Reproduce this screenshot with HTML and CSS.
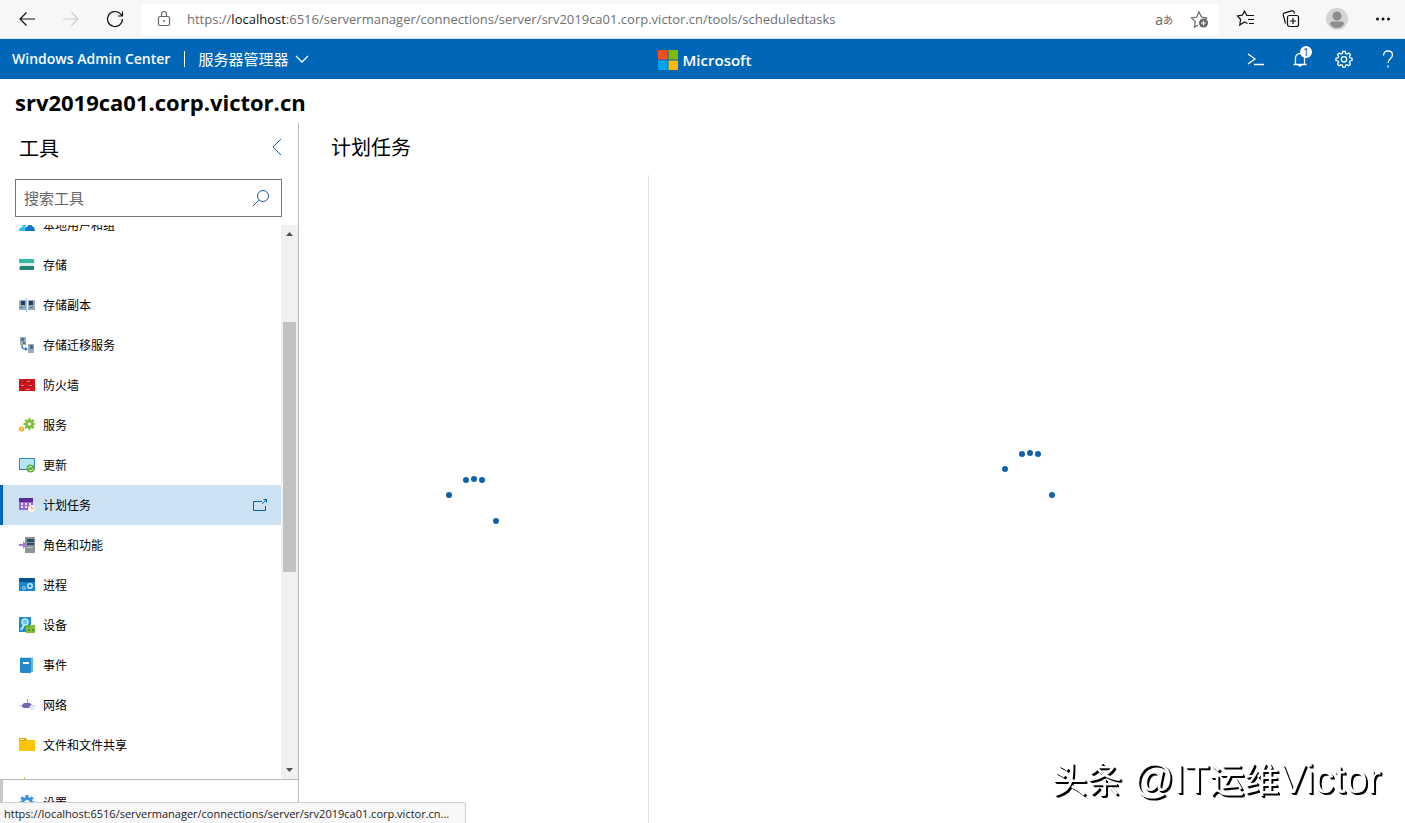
FILE: index.html
```html
<!DOCTYPE html>
<html lang="zh-CN">
<head>
  <meta charset="utf-8">
  <title>Windows Admin Center</title>
  <link rel="stylesheet" href="styles.css">
</head>
<body>
  <div class="browser-bar">
    <button class="nav-btn" title="Back">
      <svg viewBox="0 0 20 20"><path d="M18 10H3M9.500 3.500L3 10l6.500 6.500"/></svg>
    </button>
    <button class="nav-btn disabled" title="Forward" disabled>
      <svg viewBox="0 0 20 20"><path d="M2 10h15M10.500 3.500L17 10l-6.500 6.500"/></svg>
    </button>
    <button class="nav-btn" title="Refresh">
      <svg viewBox="0 0 20 20"><path d="M17.500 10a7.500 7.500 0 1 1-2.300-5.400L17.500 7M17.500 2.500V7H13"/></svg>
    </button>
    <div class="address">
      <svg class="lock" viewBox="0 0 16 18"><rect x="2.500" y="6.500" width="11" height="9" rx="1.500"/><path d="M5.500 6.500V4a2.500 2.500 0 0 1 5 0v2.500"/><circle class="solid" cx="8" cy="11" r="1"/></svg>
      <div class="url" role="textbox" aria-label="Address" contenteditable="true" spellcheck="false">https://<b>localhost</b>:6516/servermanager/connections/server/srv2019ca01.corp.victor.cn/tools/scheduledtasks</div>
      <button class="translate" title="Translate">a<small>あ</small></button>
      <button class="add-favorite" title="Add favorite">
        <svg viewBox="0 0 20 20"><path d="M8 16l-3.500 2 .8-5.300L1.500 8.800l5.200-.8L9 3l2.400 5 5.100.8-2 2"/><circle class="solid" cx="13.500" cy="14" r="4.500"/><path class="plus" d="M13.500 11.500v5M11 14h5"/></svg>
      </button>
    </div>
    <div class="browser-actions">
      <button title="Favorites">
        <svg viewBox="0 0 20 20"><path d="M11.500 14.500L8.500 13l-4.700 3 .8-5.500L1.500 7l4.800-.8L8.500 2l2.300 4.500H18M12 10.500h6M13 14.500h5"/></svg>
      </button>
      <button title="Collections">
        <svg viewBox="0 0 20 20"><path d="M4.500 14.500L2.300 6.200A2 2 0 0 1 3.700 3.800l7-2a2 2 0 0 1 2.500 1.500l.3 1.200"/><rect x="6.500" y="6.500" width="11" height="11" rx="2"/><path d="M12 9v6M9 12h6"/></svg>
      </button>
      <button title="Profile">
        <svg class="avatar" viewBox="0 0 22 22"><circle cx="11" cy="11" r="11" fill="#d4d4d4"/><circle cx="11" cy="8" r="4.500" fill="#8f8c8a"/><path d="M4 16c0-2 1.500-2.500 3-2.500h8c1.500 0 3 .5 3 2.500-1.500 2.800-4 4-7 4s-5.500-1.200-7-4z" fill="#8f8c8a"/></svg>
      </button>
      <button title="More">
        <svg viewBox="0 0 20 20"><circle class="solid" cx="4.500" cy="10" r="1.500"/><circle class="solid" cx="10" cy="10" r="1.500"/><circle class="solid" cx="15.500" cy="10" r="1.500"/></svg>
      </button>
    </div>
  </div>

  <header class="app-bar">
    <div class="app-nav">
      <a class="app-name" href="#">Windows Admin Center</a>
      <button class="solution">服务器管理器
        <svg viewBox="0 0 14 14"><path d="M1 4l6 6 6-6"/></svg>
      </button>
    </div>
    <div class="brand">
      <svg viewBox="0 0 20 20"><path fill="#f25022" d="M0 0h9.500v9.500H0z"/><path fill="#7fba00" d="M10.500 0H20v9.500h-9.500z"/><path fill="#00a4ef" d="M0 10.500h9.500V20H0z"/><path fill="#ffb900" d="M10.500 10.500H20V20h-9.500z"/></svg>
      <span>Microsoft</span>
    </div>
    <div class="app-actions">
      <button title="PowerShell">
        <svg viewBox="0 0 18 18"><path d="M1 4l7 5-7 5M7 14.500h10"/></svg>
      </button>
      <button class="alerts" title="Notifications">
        <svg viewBox="0 0 18 18"><path d="M2.500 14.500h13M4.500 14.500V8a4.500 4.500 0 0 1 9 0v6.500M7.500 15a1.600 1.600 0 0 0 3 0"/></svg>
        <span class="badge">1</span>
      </button>
      <button title="Settings">
        <svg viewBox="0 0 18 18"><path d="M7.700 1.500h2.600l.4 2 1.300.6 1.900-1.100 1.500 1.700-1 1.800.6 1.300 2 .5v2.200l-2 .5-.6 1.300 1 1.800-1.700 1.700-1.700-1.100-1.300.5-.4 2H7.700l-.4-2-1.300-.5-1.800 1.100-1.600-1.700 1-1.800-.6-1.300-2-.5V8.300l2-.5.6-1.300-1-1.800L4.200 3 6 4.100l1.300-.6z"/><circle cx="9" cy="9.300" r="2.700"/></svg>
      </button>
      <button title="Help">
        <svg viewBox="0 0 18 18"><path d="M4.500 5.500c0-3 2-4.500 4.500-4.500s4.500 1.500 4.500 4c0 3.500-4.500 3.500-4.500 8M9 15.500v2"/></svg>
      </button>
    </div>
  </header>

  <h1 class="server-name">srv2019ca01.corp.victor.cn</h1>

  <div class="workspace">
    <aside class="tools">
      <div class="tools-header">
        <h2>工具</h2>
        <button title="Collapse">
          <svg viewBox="0 0 10 18"><path d="M9 1L1 9l8 8"/></svg>
        </button>
      </div>
      <div class="search">
        <input type="text" placeholder="搜索工具" aria-label="搜索工具">
        <svg viewBox="0 0 18 18"><circle cx="11" cy="7" r="5.500"/><path d="M7 11l-6 6"/></svg>
      </div>

      <div class="tool-scroll">
        <ul class="tool-list">
          <li><a href="#">
            <svg viewBox="0 0 16 16"><circle cx="5" cy="7" r="2.500" fill="#32bedd"/><path d="M0 14c0-6 10-6 10 0z" fill="#32bedd"/><circle cx="11" cy="6" r="3" fill="#1466bd"/><path d="M6 14c0-7 10-7 10 0z" fill="#1177c8"/></svg>
            本地用户和组</a></li>
          <li><a href="#">
            <svg viewBox="0 0 16 16"><path fill="#35b8a5" d="M0 2h15v4H0z"/><path fill="#d8f0ed" d="M1 6h14v3H1z"/><path fill="#258277" d="M1 9h14v4H1z"/><path fill="#75cbc1" d="M0 10h1v3H0z"/></svg>
            存储</a></li>
          <li><a href="#">
            <svg viewBox="0 0 16 16"><path fill="#9aaabd" d="M0 3h7v10H0zM9 3h7v10H9z"/><path fill="#253c5c" d="M2 4h4v4H2zM10 4h4v4h-4z"/><path fill="#9dccee" d="M7 1h1v14H7z"/><path fill="#506986" d="M1 10h3v1H1zM11 10h3v1h-3z"/></svg>
            存储副本</a></li>
          <li><a href="#">
            <svg viewBox="0 0 16 16"><path fill="#a0abb3" d="M1 0h6v8H1zM9 7h6v9H9z"/><path fill="#1685c5" d="M2 1h3v3H2z"/><path fill="#47698b" d="M4 5h2v2H4zM11 8h3v4h-3z"/><path d="M3 8c0 4 1 4 5 4" fill="none" stroke="#2779cc" stroke-width="1.500"/><path fill="#2779cc" d="M6 10l3 2-3 2z"/></svg>
            存储迁移服务</a></li>
          <li><a href="#">
            <svg viewBox="0 0 16 16"><path fill="#d6141c" d="M0 2h16v12H0z"/><path fill="none" stroke="#a8161d" d="M0 5.500h16M0 9.500h16M5.500 2v3M10.500 6v3M4.500 10v4M12.500 2v3"/><path stroke="#f58c8c" d="M2 8.500h3M8 4.500h3M7 12.500h4M10 8.500h3"/></svg>
            防火墙</a></li>
          <li><a href="#">
            <svg viewBox="0 0 16 16"><circle cx="10.500" cy="7" r="3" fill="none" stroke="#76bc2d" stroke-width="2.500"/><path stroke="#76bc2d" stroke-width="2" d="M10.500 1v2M10.500 11v2M4.500 7h2M14.500 7h1.500M6.200 2.700l1.500 1.500M13.300 9.800l1.500 1.500M6.200 11.300l1.500-1.500M13.300 4.200l1.500-1.500"/><circle cx="2.500" cy="12" r="1.700" fill="none" stroke="#f2b01c" stroke-width="1.800"/></svg>
            服务</a></li>
          <li><a href="#">
            <svg viewBox="0 0 16 16"><path fill="#b6e4f7" stroke="#3687b8" d="M.5 1.500h15v11H.5z"/><path fill="#3e7aa3" d="M0 12h9v1H0z"/><circle cx="11.500" cy="11.500" r="4" fill="#5fae37"/><path fill="none" stroke="#e4f6d8" d="M9.500 11.500a2 2 0 0 1 3.500-1.500M13.500 11.500a2 2 0 0 1-3.500 1.500"/></svg>
            更新</a></li>
          <li class="active"><a href="#">
            <svg viewBox="0 0 16 16"><path fill="#5b2a9b" d="M0 1h14v4H0z"/><path fill="#9868d5" d="M0 5h14v8H0z"/><path fill="#efe3fc" d="M2 6h2v2H2zM6 6h2v2H6zM10 6h2v2h-2zM2 9h2v2H2zM6 9h2v2H6z"/><circle cx="12.500" cy="11.500" r="3.500" fill="#fff3e0"/><path fill="none" stroke="#df9f61" d="M12.500 9.500v2h2"/></svg>
            计划任务
            <svg class="popout" viewBox="0 0 16 14"><path d="M10 3.500H1.500v9h12V8M10 6l5-5M11.500 1.500h3v3"/></svg></a></li>
          <li><a href="#">
            <svg viewBox="0 0 16 16"><path fill="#8b9299" d="M6 0h10v16H6z"/><path fill="#24506b" d="M8 2h7v3H8zM8 6h7v2H8z"/><path fill="#c0c8cd" d="M8 10h6v1H8z"/><path fill="#a57bd3" d="M0 7h4V4l4 4-4 4V9H0z"/></svg>
            角色和功能</a></li>
          <li><a href="#">
            <svg viewBox="0 0 16 16"><path fill="#1785d0" d="M0 1h16v13H0z"/><path fill="#07558f" d="M0 1h16v4H0z"/><circle cx="11" cy="9" r="2.200" fill="none" stroke="#c9efff" stroke-width="1.500"/><circle cx="5" cy="11" r="1.500" fill="none" stroke="#9bdaf5"/></svg>
            进程</a></li>
          <li><a href="#">
            <svg viewBox="0 0 16 16"><path fill="#2589cd" d="M0 0h12v15H0z"/><circle cx="6" cy="5" r="3" fill="#64c5ef" stroke="#b9edff" stroke-width="1.500"/><path stroke="#b9edff" stroke-width="2" d="M5 8l-3 5"/><path fill="#80be38" d="M7 8h9v8H7z"/><path fill="#4c962d" d="M8 9h3v1H8zM9 12h2v2H9zM13 12h2v2h-2z"/></svg>
            设备</a></li>
          <li><a href="#">
            <svg viewBox="0 0 16 16"><path fill="#65b1e6" d="M2 0h12v15H2z"/><path fill="#2488cf" d="M1 1h11v15H2l-1-1z"/><path fill="#bce4fa" d="M3 0h11v1H3z"/><path fill="#fff" d="M4 5h6v2H4z"/></svg>
            事件</a></li>
          <li><a href="#">
            <svg viewBox="0 0 16 16"><path fill="#d1c3f2" d="M0 8h16v1H0z"/><path fill="#7463b7" d="M3 8l2-2h6l2 2v3H5L3 10z"/><path fill="#a794db" d="M8 2h1v4H8z"/><circle cx="13" cy="10.500" r="2.500" fill="#d6ebfa"/></svg>
            网络</a></li>
          <li><a href="#">
            <svg viewBox="0 0 16 16"><path fill="#e6a500" d="M0 1h7l1 2h8v11H0z"/><path fill="#ffc400" d="M0 4h7l1-1h8v11H0z"/><path fill="#fff0b5" d="M1 2h4v1H1z"/></svg>
            文件和文件共享</a></li>
          <li><a href="#" title="More">
            <svg viewBox="0 0 16 16"><path fill="#e3b866" d="M5 0h1v9H5z"/></svg></a></li>
        </ul>
        <div class="scrollbar" aria-hidden="true">
          <svg viewBox="0 0 17 17"><path d="M5 11l3.500-4 3.500 4z"/></svg>
          <div class="track"><div class="thumb"></div></div>
          <svg viewBox="0 0 17 17"><path d="M5 6l3.500 4L12 6z"/></svg>
        </div>
      </div>

      <a class="tool-settings" href="#">
        <svg viewBox="0 0 16 16"><circle cx="8" cy="8" r="4.500" fill="none" stroke="#3b8fd6" stroke-width="3"/><path stroke="#3b8fd6" stroke-width="3" d="M8 0v3M8 13v3M0 8h3M13 8h3M2.300 2.300l2 2M11.700 11.700l2 2M2.300 13.700l2-2M11.700 4.300l2-2"/></svg>
        设置</a>
    </aside>

    <main class="content">
      <h2>计划任务</h2>
      <div class="panes">
        <section class="pane library">
          <svg class="spinner" viewBox="0 0 60 60"><circle cx="5" cy="20" r="3"/><circle cx="22" cy="5" r="3"/><circle cx="30" cy="4" r="3"/><circle cx="38" cy="5" r="3"/><circle cx="52" cy="46" r="3"/></svg>
        </section>
        <section class="pane details">
          <svg class="spinner" viewBox="0 0 60 60"><circle cx="5" cy="20" r="3"/><circle cx="22" cy="5" r="3"/><circle cx="30" cy="4" r="3"/><circle cx="38" cy="5" r="3"/><circle cx="52" cy="46" r="3"/></svg>
        </section>
      </div>
    </main>
  </div>

  <div class="status">https://localhost:6516/servermanager/connections/server/srv2019ca01.corp.victor.cn...</div>
  <div class="watermark"><span>头条</span> @IT<span>运维</span>Victor</div>
</body>
</html>
```
FILE: styles.css
```css
* {
  box-sizing: border-box;
}

body {
  display: flex;
  flex-direction: column;
  height: 100vh;
  margin: 0;
  overflow: hidden;
  font-family: "Open Sans", "Noto Sans CJK SC", sans-serif;
  font-size: 12px;
  color: #000;
  background: #fff;
}

button {
  display: flex;
  align-items: center;
  justify-content: center;
  padding: 0;
  border: none;
  background: none;
  color: inherit;
  font-family: inherit;
  cursor: pointer;
}

a {
  color: inherit;
  text-decoration: none;
}

h1,
h2 {
  margin: 0;
}

svg {
  flex: none;
}

/* browser */

.browser-bar {
  display: flex;
  align-items: center;
  flex: none;
  height: 39px;
  padding: 0 12px 0 5px;
  background: #f7f7f7;
  border-bottom: 1px solid #cfe6f5;
}

.browser-bar svg {
  width: 20px;
  height: 20px;
  fill: none;
  stroke: #111;
  stroke-width: 1.2;
}

.browser-bar .solid {
  fill: #111;
  stroke: none;
}

.nav-btn {
  width: 44px;
  height: 32px;
}

.nav-btn.disabled svg {
  stroke: #ccc;
}

.address {
  display: flex;
  align-items: center;
  flex: 1;
  min-width: 0;
  height: 31px;
  margin-left: 5px;
  padding: 0 9px 0 14px;
  background: #fff;
  border-radius: 3px;
}

.address svg {
  stroke: #666;
}

.address .solid {
  fill: #666;
}

.address .lock {
  width: 16px;
  height: 18px;
}

.address .plus {
  stroke: #fff;
}

.url {
  flex: 1;
  min-width: 0;
  margin-left: 15px;
  overflow: hidden;
  font-size: 13px;
  line-height: 20px;
  color: #707070;
  white-space: nowrap;
}

.url b {
  font-weight: 400;
  color: #111;
}

.translate {
  margin-right: 17px;
  font-size: 14px;
  color: #666;
}

.translate small {
  font-size: 10px;
}

.browser-actions {
  display: flex;
  gap: 25px;
  margin-left: 17px;
}

.browser-actions .avatar {
  width: 22px;
  height: 22px;
  stroke: none;
}

/* app header */

.app-bar {
  display: grid;
  grid-template-columns: 1fr auto 1fr;
  align-items: center;
  flex: none;
  height: 40px;
  padding: 0 8px 0 12px;
  background: #0067b8;
  color: #fff;
}

.app-bar svg {
  width: 18px;
  height: 18px;
  fill: none;
  stroke: #fff;
  stroke-width: 1.3;
}

.app-nav {
  display: flex;
  align-items: center;
}

.app-name {
  padding-right: 14px;
  border-right: 1px solid #fff;
  font-size: 14px;
  font-weight: 600;
  line-height: 16px;
}

.solution {
  gap: 7px;
  margin-left: 13px;
  font-size: 15px;
  line-height: 20px;
}

.app-bar .solution svg {
  width: 14px;
  height: 14px;
}

.brand {
  display: flex;
  align-items: center;
  gap: 5px;
  padding-top: 2px;
  font-size: 15px;
  font-weight: 600;
}

.app-bar .brand svg {
  width: 20px;
  height: 20px;
  stroke: none;
}

.app-actions {
  display: flex;
  justify-content: flex-end;
  gap: 26px;
}

.alerts {
  position: relative;
}

.badge {
  position: absolute;
  top: -4px;
  right: -3px;
  width: 12px;
  height: 12px;
  border-radius: 6px;
  background: #fff;
  color: #1b3f8f;
  font-size: 11px;
  line-height: 12px;
}

.server-name {
  flex: none;
  height: 44px;
  padding-left: 15px;
  font-size: 22px;
  font-weight: 700;
  line-height: 46px;
}

/* tools */

.workspace {
  display: flex;
  flex: 1;
  min-height: 0;
}

.tools {
  display: flex;
  flex-direction: column;
  flex: none;
  width: 299px;
  border-right: 1px solid #b8b8b8;
}

.tools-header {
  display: flex;
  align-items: center;
  justify-content: space-between;
  height: 48px;
  padding: 0 16px 0 19px;
}

.tools h2,
.content h2 {
  font-size: 20px;
  font-weight: 400;
}

.tools-header svg {
  width: 10px;
  height: 18px;
  fill: none;
  stroke: #0067b8;
}

.search {
  display: flex;
  align-items: center;
  flex: none;
  height: 38px;
  margin: 8px 16px 8px 15px;
  padding: 0 11px 0 8px;
  border: 1px solid #777;
}

.search input {
  flex: 1;
  min-width: 0;
  padding: 0;
  border: none;
  outline: none;
  font-family: inherit;
  font-size: 15px;
}

.search input::placeholder {
  color: #666;
}

.search svg {
  width: 18px;
  height: 18px;
  fill: none;
  stroke: #2456a6;
}

.tool-scroll {
  display: flex;
  flex: 1;
  min-height: 0;
  overflow: hidden;
}

/* list is scrolled half a row */
.tool-list {
  flex: 1;
  margin: -20px 0 0;
  padding: 0;
  list-style: none;
}

.tool-list a {
  display: flex;
  align-items: center;
  gap: 8px;
  height: 40px;
  padding: 0 13px 0 16px;
  border-left: 3px solid transparent;
}

.tool-list svg,
.tool-settings svg {
  width: 16px;
  height: 16px;
}

.tool-list .active a {
  background: #cce1f2;
  border-left-color: #0067b8;
}

.tool-list .popout {
  height: 14px;
  margin-left: auto;
  fill: none;
  stroke: #0067b8;
}

.scrollbar {
  display: flex;
  flex-direction: column;
  width: 17px;
  background: #f1f1f1;
}

.scrollbar svg {
  width: 17px;
  height: 17px;
  fill: #505050;
}

.track {
  flex: 1;
  padding: 0 2px;
}

.thumb {
  height: 48%;
  margin-top: 80px;
  background: #c1c1c1;
}

.tool-settings {
  display: flex;
  align-items: center;
  flex: none;
  gap: 8px;
  height: 44px;
  padding: 2px 0 0 16px;
  border-top: 1px solid #b8b8b8;
  border-left: 3px solid #c8c8c8;
}

/* content */

.content {
  display: flex;
  flex-direction: column;
  flex: 1;
  min-width: 0;
}

.content h2 {
  height: 52px;
  padding-left: 32px;
  line-height: 50px;
}

.panes {
  display: flex;
  flex: 1;
}

.pane {
  display: flex;
  align-items: center;
  justify-content: center;
}

.library {
  width: 350px;
  padding-top: 12px;
  border-right: 1px solid #e3e3e3;
}

.details {
  flex: 1;
  padding: 0 0 40px 6px;
}

.spinner {
  width: 60px;
  height: 60px;
  fill: #0f62ab;
}

/* overlays */

.status {
  position: fixed;
  bottom: 0;
  left: 0;
  height: 21px;
  max-width: 468px;
  padding: 0 16px 0 4px;
  border: 1px solid #d0d0d0;
  border-width: 1px 1px 0 0;
  border-radius: 0 3px 0 0;
  background: #f7f7f7;
  font-size: 11px;
  line-height: 21px;
  color: #222;
}

.watermark {
  position: fixed;
  right: 24px;
  bottom: 18px;
  color: #fff;
  font-family: "Liberation Sans", "Noto Sans CJK SC", sans-serif;
  font-size: 40px;
  line-height: 48px;
  text-shadow: 1px 1px 0 #000, 2px 2px 0 #000;
}

.watermark span {
  font-size: 35px;
}
```
